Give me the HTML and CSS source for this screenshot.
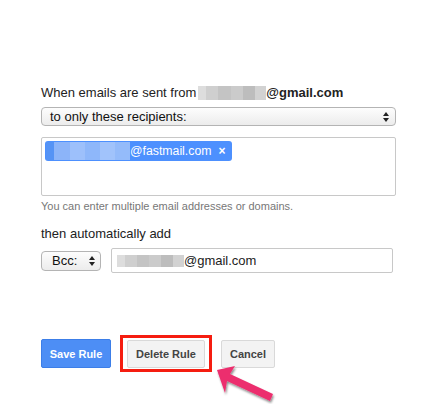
FILE: index.html
```html
<!DOCTYPE html>
<html>
<head>
<meta charset="utf-8">
<link rel="stylesheet" href="styles.css">
</head>
<body>
<div class="page">
  <div class="line">When emails are sent from <span class="blur blur-gray blur-from"></span><b>@gmail.com</b></div>
  <div class="select select-wide">
    <span>to only these recipients:</span>
    <span class="arrows"><i class="up"></i><i class="down"></i></span>
  </div>
  <div class="textarea">
    <span class="chip"><span class="blur blur-blue"></span>@fastmail.com<span class="x">×</span></span>
  </div>
  <div class="hint">You can enter multiple email addresses or domains.</div>
  <div class="line then">then automatically add</div>
  <div class="addrow">
    <div class="select select-bcc">
      <span>Bcc:</span>
      <span class="arrows"><i class="up"></i><i class="down"></i></span>
    </div>
    <div class="input"><span class="blur blur-gray blur-input"></span>@gmail.com</div>
  </div>
  <div class="buttons">
    <button class="btn btn-blue">Save Rule</button>
    <div class="highlight"><button class="btn btn-gray btn-delete">Delete Rule</button></div>
    <button class="btn btn-gray btn-cancel">Cancel</button>
  </div>
</div>
<svg class="arrow" width="80" height="50" viewBox="0 0 80 50">
  <defs>
    <filter id="sh" x="-20%" y="-20%" width="150%" height="150%">
      <feDropShadow dx="1" dy="2" stdDeviation="1.2" flood-color="#000" flood-opacity="0.45"/>
    </filter>
  </defs>
  <g filter="url(#sh)">
    <polygon points="7,15 25,11 20,19 63,39 60,46 17,26 15,38" fill="#ec2f6e"/>
  </g>
</svg>
</body>
</html>
```
FILE: styles.css
```css
html, body {
  margin: 0;
  padding: 0;
  background: #fff;
}
body {
  font-family: "Liberation Sans", Arial, sans-serif;
  color: #222;
  font-size: 13px;
  position: relative;
  width: 445px;
  height: 404px;
  overflow: hidden;
}
.page {
  padding: 85px 0 0 41px;
  width: 356px;
}
.line {
  line-height: 16px;
  height: 16px;
  display: flex;
  align-items: center;
}
.line b {
  font-weight: bold;
}
.blur {
  display: inline-block;
  flex-shrink: 0;
}
.blur-gray {
  background:
    linear-gradient(90deg, #ddd 0 12%, #cfcfcf 12% 30%, #c4c4c4 30% 48%, #cbcbcb 48% 66%, #bdbdbd 66% 84%, #d2d2d2 84% 100%);
}
.blur-from {
  width: 68px;
  height: 14px;
  margin-left: 2px;
}
.select {
  box-sizing: border-box;
  height: 19px;
  border: 1px solid #b4b4b4;
  border-radius: 4px;
  background: linear-gradient(#fdfdfd, #ececec);
  display: flex;
  align-items: center;
  justify-content: space-between;
  padding: 0 6px 0 8px;
  font-size: 13px;
  color: #111;
}
.select-wide {
  margin-top: 6px;
  width: 355px;
}
.arrows {
  display: flex;
  flex-direction: column;
  gap: 2px;
}
.arrows i {
  display: block;
  width: 0;
  height: 0;
  border-left: 3.5px solid transparent;
  border-right: 3.5px solid transparent;
}
.arrows .up {
  border-bottom: 4px solid #222;
}
.arrows .down {
  border-top: 4px solid #222;
}
.textarea {
  box-sizing: border-box;
  margin-top: 11px;
  width: 355px;
  height: 59px;
  border: 1px solid #c8c8c8;
  border-radius: 2px;
  padding: 3px 3px;
}
.chip {
  display: inline-flex;
  align-items: center;
  height: 20px;
  box-sizing: border-box;
  background: #4d90fe;
  border-radius: 3px;
  color: #fff;
  font-size: 12.3px;
  padding: 0 6px 0 1px;
  white-space: nowrap;
}
.blur-blue {
  width: 84px;
  height: 18px;
  background:
    linear-gradient(90deg, #5593f5 0 10%, #8cb4f9 10% 28%, #9dc0fb 28% 46%, #8eb7fa 46% 64%, #a1c3fb 64% 82%, #94bbfa 82% 100%);
}
.chip .x {
  margin-left: 7px;
  font-weight: bold;
  font-size: 12px;
}
.hint {
  margin-top: 3px;
  font-size: 11px;
  color: #777;
  line-height: 14px;
}
.then {
  margin-top: 13px;
}
.addrow {
  margin-top: 6px;
  display: flex;
  align-items: center;
  gap: 10px;
}
.select-bcc {
  width: 60px;
  height: 20px;
  padding: 0 5px 0 10px;
}
.input {
  box-sizing: border-box;
  width: 282px;
  height: 25px;
  border: 1px solid #c8c8c8;
  border-radius: 2px;
  display: flex;
  align-items: center;
  padding-left: 5px;
  font-size: 13px;
  color: #222;
}
.blur-input {
  width: 67px;
  height: 12px;
}
.buttons {
  margin-top: 62px;
  display: flex;
  align-items: center;
  gap: 9px;
}
.btn {
  font-family: "Liberation Sans", Arial, sans-serif;
  font-size: 11px;
  font-weight: bold;
  height: 29px;
  box-sizing: border-box;
  border-radius: 2px;
  padding: 0;
  cursor: default;
}
.btn-blue {
  width: 70px;
  background: #4d8ef5;
  border: 1px solid #3c7ee8;
  color: #fff;
}
.btn-gray {
  background: #f3f3f3;
  border: 1px solid #d9d9d9;
  color: #444;
}
.highlight {
  border: 3px solid #f51d10;
  padding: 2px 4px 1px 4px;
  display: flex;
}
.btn-delete {
  width: 78px;
  height: 28px;
}
.btn-cancel {
  width: 54px;
  height: 28px;
}
.arrow {
  position: absolute;
  left: 210px;
  top: 355px;
}
```
